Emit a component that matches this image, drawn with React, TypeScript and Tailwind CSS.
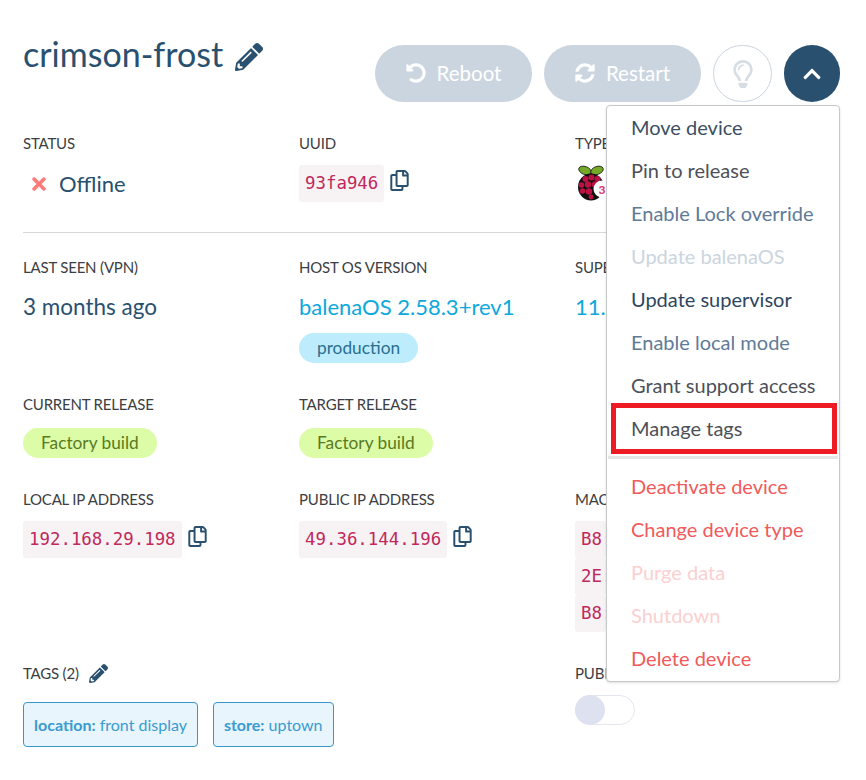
import React from "react";
import { FaPencilAlt, FaUndoAlt, FaSyncAlt, FaRegLightbulb, FaChevronUp, FaRegCopy, FaTimes } from "react-icons/fa";

const Label = ({ children }: { children: React.ReactNode }) => (
  <div className="h-5 whitespace-nowrap text-[15px] leading-5 tracking-[-0.2px] text-[#3c3e42]">{children}</div>
);

const Code = ({ children }: { children: React.ReactNode }) => (
  <span className="inline-flex h-[37px] items-center whitespace-nowrap rounded-[3px] bg-[#f7f3f5] px-[6px] font-['DejaVu_Sans_Mono',monospace] text-[17.4px] text-[#c0295c]">
    {children}
  </span>
);

const Copyable = ({ children }: { children: React.ReactNode }) => (
  <div className="flex items-start">
    <Code>{children}</Code>
    <FaRegCopy className="ml-[5px] mt-[5px] text-[21px] text-[#2a506f]" />
  </div>
);

const Pill = ({ children, className }: { children: React.ReactNode; className: string }) => (
  <span className={`inline-flex h-[30px] items-center rounded-full px-[18px] text-[17.3px] ${className}`}>{children}</span>
);

const Raspberry = () => (
  <svg width="31" height="36" viewBox="0 0 31 36" className="block overflow-hidden">
    <ellipse cx="10" cy="5.5" rx="6.5" ry="4" transform="rotate(20 10 5.5)" fill="#75a928" stroke="#1a1a1a" strokeWidth="0.8" />
    <ellipse cx="22" cy="5.5" rx="6.5" ry="4" transform="rotate(-20 22 5.5)" fill="#75a928" stroke="#1a1a1a" strokeWidth="0.8" />
    <ellipse cx="16" cy="22" rx="13" ry="13.5" fill="#111" />
    <circle cx="10.5" cy="14" r="3" fill="#bc1142" />
    <circle cx="16.5" cy="12.5" r="3" fill="#bc1142" />
    <circle cx="22.5" cy="14" r="3" fill="#bc1142" />
    <circle cx="6.5" cy="20" r="2.8" fill="#bc1142" />
    <circle cx="13" cy="19.5" r="3.2" fill="#bc1142" />
    <circle cx="20" cy="19.5" r="3.2" fill="#bc1142" />
    <circle cx="7.5" cy="26" r="2.8" fill="#bc1142" />
    <circle cx="14" cy="26.5" r="3.2" fill="#bc1142" />
    <circle cx="16" cy="32" r="2.4" fill="#bc1142" />
    <circle cx="27" cy="24" r="8.5" fill="#fff" />
    <text x="23.5" y="28.5" fontSize="12" fontWeight="700" fill="#d6336c" fontFamily="Lato, sans-serif">3</text>
  </svg>
);

const menuTop = [
  { t: "Move device", c: "text-[#3c4f63]" },
  { t: "Pin to release", c: "text-[#4d5057]" },
  { t: "Enable Lock override", c: "text-[#5f7a96]" },
  { t: "Update balenaOS", c: "text-[#cbd5e0]" },
  { t: "Update supervisor", c: "text-[#2e4560]" },
  { t: "Enable local mode", c: "text-[#5f7a96]" },
  { t: "Grant support access", c: "text-[#4d5057]" },
  { t: "Manage tags", c: "text-[#4d5057]" },
];
const menuBottom = [
  { t: "Deactivate device", c: "text-[#f05a5a]" },
  { t: "Change device type", c: "text-[#f05a5a]" },
  { t: "Purge data", c: "text-[#fbd0d0]" },
  { t: "Shutdown", c: "text-[#fbd0d0]" },
  { t: "Delete device", c: "text-[#f05a5a]" },
];

const Tag = ({ k, v }: { k: string; v: string }) => (
  <span className="inline-flex h-[45px] items-center whitespace-nowrap rounded-[4px] border border-[#3a95c8] bg-[#e8f5fc] px-[10px] text-[16px] text-[#3a9bd0]">
    <b className="font-bold">{k}:</b>&nbsp;{v}
  </span>
);

export default function App() {
  return (
    <div className="relative h-[780px] w-[866px] overflow-hidden bg-white pl-[23px] font-['Lato','Noto_Sans',sans-serif]">
      <div className="flex h-[133px] items-start justify-between pr-[26px]">
        <div className="mt-[30px] flex items-center">
          <span className="text-[34px] leading-[48px] text-[#2a506f]">crimson-frost</span>
          <FaPencilAlt className="ml-3 mt-[5px] text-[28px] text-[#2a506f]" />
        </div>
        <div className="mt-[45px] flex gap-3">
          <div className="flex h-[57px] w-[157px] items-center justify-center rounded-full bg-[#cbd5e0] pb-px text-[20.5px] text-white">
            <FaUndoAlt className="mr-[11px] text-[20px]" />Reboot
          </div>
          <div className="flex h-[57px] w-[157px] items-center justify-center rounded-full bg-[#cbd5e0] pb-px text-[20.5px] text-white">
            <FaSyncAlt className="mr-[11px] text-[20px]" />Restart
          </div>
          <div className="flex h-[57px] w-[59px] items-center justify-center rounded-full border border-[#cbd5e0] bg-white text-[#d5dde5]">
            <FaRegLightbulb className="text-[28px]" />
          </div>
          <div className="flex h-[57px] w-[56px] items-center justify-center rounded-full bg-[#2a506f] text-white">
            <FaChevronUp className="text-[20px]" />
          </div>
        </div>
      </div>

      <div className="grid grid-cols-[276px_276px_31px] overflow-hidden pb-[30px]">
        <div>
          <Label>STATUS</Label>
          <div className="ml-[6px] mt-[12px] flex h-[37px] items-center text-[22px] text-[#2a506f]">
            <FaTimes className="mr-[10px] text-[20px] text-[#ff7b7b]" />Offline
          </div>
        </div>
        <div>
          <Label>UUID</Label>
          <div className="mt-[12px]"><Copyable>93fa946</Copyable></div>
        </div>
        <div className="overflow-hidden">
          <Label>TYPE</Label>
          <div className="mt-[12px]"><Raspberry /></div>
        </div>
      </div>

      <div className="mr-[26px] h-px bg-[#d8d8d8]" />

      <div className="grid grid-cols-[276px_276px_31px] pt-[24px]">
        <div>
          <Label>LAST SEEN (VPN)</Label>
          <div className="mt-[12px] text-[22.5px] leading-[35px] text-[#2a506f]">3 months ago</div>
        </div>
        <div>
          <Label>HOST OS VERSION</Label>
          <div className="mt-[12px] text-[22px] leading-[35px] text-[#0da9dc]">balenaOS 2.58.3+rev1</div>
          <div className="mt-[9px]"><Pill className="bg-[#bdecfd] text-[#2a6f8f]">production</Pill></div>
        </div>
        <div className="overflow-hidden">
          <Label>SUPERVISOR VERSION</Label>
          <div className="mt-[12px] whitespace-nowrap text-[22px] leading-[35px] text-[#0da9dc]">11.14.0</div>
        </div>
      </div>

      <div className="grid grid-cols-[276px_276px_31px] pt-[31px]">
        <div>
          <Label>CURRENT RELEASE</Label>
          <div className="mt-[14px]"><Pill className="bg-[#dcfca8] text-[#5a7a1f]">Factory build</Pill></div>
        </div>
        <div>
          <Label>TARGET RELEASE</Label>
          <div className="mt-[14px]"><Pill className="bg-[#dcfca8] text-[#5a7a1f]">Factory build</Pill></div>
        </div>
      </div>

      <div className="grid grid-cols-[276px_276px_31px] pt-[31px]">
        <div>
          <Label>LOCAL IP ADDRESS</Label>
          <div className="mt-[12px]"><Copyable>192.168.29.198</Copyable></div>
        </div>
        <div>
          <Label>PUBLIC IP ADDRESS</Label>
          <div className="mt-[12px]"><Copyable>49.36.144.196</Copyable></div>
        </div>
        <div className="overflow-hidden">
          <Label>MAC ADDRESS</Label>
          <div className="mt-[12px] flex flex-col">
            <Code>B8:27:EB:10:4A:2C</Code>
            <Code>2E:0F:7A:55:91:B3</Code>
            <Code>B8:27:EB:63:D0:18</Code>
          </div>
        </div>
      </div>

      <div className="grid grid-cols-[552px_60px] pt-[31px]">
        <div>
          <div className="flex items-center">
            <Label>TAGS (2)</Label>
            <FaPencilAlt className="ml-[10px] text-[19px] text-[#2a506f]" />
          </div>
          <div className="mt-[19px] flex gap-[15px]">
            <Tag k="location" v="front display" />
            <Tag k="store" v="uptown" />
          </div>
        </div>
        <div className="overflow-hidden">
          <Label>PUBLIC DEVICE URL</Label>
          <div className="mt-3 h-[30px] w-[60px] rounded-full border border-[#e3e6ef] bg-white">
            <div className="-ml-px -mt-px h-[30px] w-[30px] rounded-full bg-[#dde1f0]" />
          </div>
        </div>
      </div>

      <div className="absolute left-[606px] top-[105px] h-[577px] w-[234px] rounded-[4px] border border-[#c6c8c9] bg-white text-[20px] shadow-sm">
        {menuTop.map((m) => (
          <div key={m.t} className={`flex h-[43px] items-center pb-[2px] pl-[24px] whitespace-nowrap ${m.c}`}>{m.t}</div>
        ))}
        <div className="mx-[1px] mt-[6px] h-[3px] bg-[#e4e6e6]" />
        <div className="h-[6px]" />
        {menuBottom.map((m) => (
          <div key={m.t} className={`flex h-[43px] items-center pb-[2px] pl-[24px] whitespace-nowrap ${m.c}`}>{m.t}</div>
        ))}
      </div>

      <div className="absolute left-[611px] top-[403px] h-[51px] w-[226px] border-[5px] border-[#ed1c24]" />
    </div>
  );
}
